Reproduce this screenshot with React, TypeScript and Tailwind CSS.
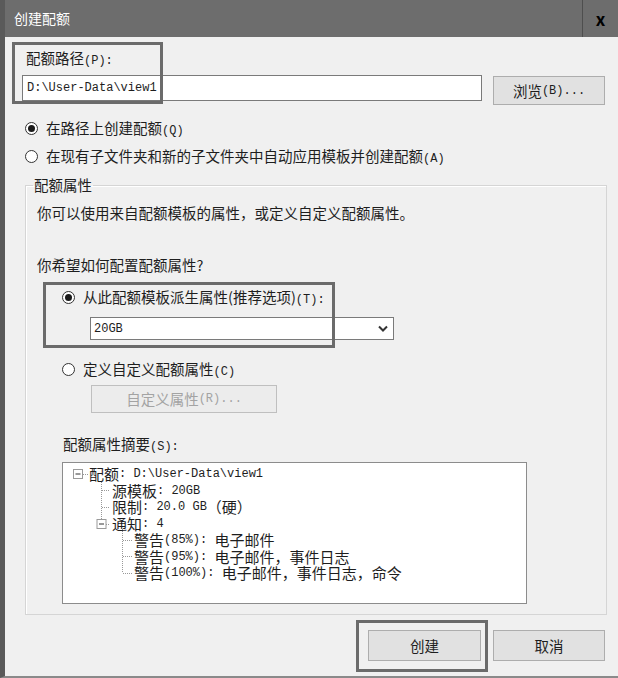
// create quota dialog (File Server Resource Manager style)

const L = ({ children }: { children: React.ReactNode }) => (
  <span className="font-['Liberation_Mono','Noto_Sans_CJK_SC',monospace] text-[12px]">
    {children}
  </span>
);

const Radio = ({ checked }: { checked?: boolean }) => (
  <span className="flex h-[13px] w-[13px] shrink-0 items-center justify-center rounded-full border border-[#333] bg-white">
    {checked && <span className="h-[7px] w-[7px] rounded-full bg-[#1a1a1a]" />}
  </span>
);

const Highlight = ({ className }: { className: string }) => (
  <div className={`pointer-events-none absolute border-[3px] border-[#6b6b6b] ${className}`} />
);

const TreeLines = () => (
  <svg className="absolute left-0 top-0" width="120" height="130" fill="none">
    {/* root expander */}
    <rect x="10.5" y="6.5" width="9" height="9" fill="#fff" stroke="#9a9a9a" />
    <line x1="12.5" y1="11" x2="17.5" y2="11" stroke="#333" />
    <line x1="20" y1="11.5" x2="25" y2="11.5" stroke="#999" strokeDasharray="1 1" />
    {/* child vertical */}
    <line x1="38.5" y1="19" x2="38.5" y2="56" stroke="#999" strokeDasharray="1 1" />
    <line x1="39" y1="27.5" x2="47" y2="27.5" stroke="#999" strokeDasharray="1 1" />
    <line x1="39" y1="44.5" x2="47" y2="44.5" stroke="#999" strokeDasharray="1 1" />
    {/* 通知 expander */}
    <rect x="34" y="56.5" width="9" height="9" fill="#fff" stroke="#9a9a9a" />
    <line x1="36" y1="61" x2="41" y2="61" stroke="#333" />
    <line x1="43" y1="61.5" x2="47" y2="61.5" stroke="#999" strokeDasharray="1 1" />
    {/* grandchildren */}
    <line x1="59.5" y1="66" x2="59.5" y2="110" stroke="#999" strokeDasharray="1 1" />
    <line x1="60" y1="77.5" x2="69" y2="77.5" stroke="#999" strokeDasharray="1 1" />
    <line x1="60" y1="93.5" x2="69" y2="93.5" stroke="#999" strokeDasharray="1 1" />
    <line x1="60" y1="110.5" x2="69" y2="110.5" stroke="#999" strokeDasharray="1 1" />
  </svg>
);

const treeRows: { pl: string; cjk: string; rest: string; tail?: string }[] = [
  { pl: "pl-[26px]", cjk: "配额", rest: ": D:\\User-Data\\view1" },
  { pl: "pl-[49px]", cjk: "源模板", rest: ": 20GB" },
  { pl: "pl-[49px]", cjk: "限制", rest: ": 20.0 GB", tail: "（硬）" },
  { pl: "pl-[49px]", cjk: "通知", rest: ": 4" },
  { pl: "pl-[71px]", cjk: "警告", rest: "(85%): ", tail: "电子邮件" },
  { pl: "pl-[71px]", cjk: "警告", rest: "(95%): ", tail: "电子邮件，事件日志" },
  { pl: "pl-[71px]", cjk: "警告", rest: "(100%): ", tail: "电子邮件，事件日志，命令" },
];

const App = () => {
  return (
    <div className="relative flex h-[678px] w-[618px] flex-col overflow-hidden border-b-2 border-l-[5px] border-b-[#8a8a8a] border-l-[#5a5a5a] bg-[#f0f0f0] font-['Noto_Sans_CJK_SC',sans-serif] text-[14.5px] text-[#1e1e1e]">
      {/* title bar */}
      <div className="flex h-[37px] shrink-0 items-center bg-[#6d6d6d]">
        <span className="flex-1 pl-[9px] text-[14px] text-white">创建配额</span>
        <span className="flex h-full w-[36px] items-center justify-center border-l border-[#4e4e4e] text-[17px] font-bold text-black">
          x
        </span>
      </div>

      <div className="flex flex-1 flex-col pl-[17px] pr-[13px] pt-[11px]">
        {/* quota path */}
        <div className="ml-[4px] leading-[20px]">
          配额路径<L>(P):</L>
        </div>
        <div className="mt-[4px] flex items-start gap-[11px]">
          <div className="flex h-[26px] w-[460px] items-center border border-[#7a7a7a] bg-white pl-[4px] font-['Liberation_Mono',monospace] text-[12px]">
            D:\User-Data\view1
          </div>
          <button className="mt-[1px] flex h-[29px] flex-1 items-center justify-center border border-[#adadad] bg-[#e1e1e1]">
            浏览<L>(B)...</L>
          </button>
        </div>

        <div className="mt-[13px] flex h-[20px] items-center gap-[8px] pl-[3px]">
          <Radio checked />
          <span>
            在路径上创建配额<L>(Q)</L>
          </span>
        </div>
        <div className="mt-[8px] flex h-[20px] items-center gap-[8px] pl-[3px]">
          <Radio />
          <span>
            在现有子文件夹和新的子文件夹中自动应用模板并创建配额<L>(A)</L>
          </span>
        </div>

        {/* quota properties group */}
        <fieldset className="ml-[3px] mr-[-2px] mt-[9px] border border-[#d5d5d5] pb-[10px] pl-[11px] shadow-[inset_1px_1px_0_#fff]">
          <legend className="-ml-[4px] px-[1px] leading-[20px]">配额属性</legend>
          <div className="mt-[8px] leading-[20px]">你可以使用来自配额模板的属性，或定义自定义配额属性。</div>
          <div className="mt-[32px] leading-[20px]">你希望如何配置配额属性?</div>

          <div className="mt-[12px] flex h-[20px] items-center gap-[8px] pl-[25px]">
            <Radio checked />
            <span>
              从此配额模板派生属性(推荐选项)<L>(T):</L>
            </span>
          </div>
          <div className="ml-[53px] mt-[10px] flex h-[23px] w-[304px] items-center justify-between border border-[#7a7a7a] bg-white pl-[3px] pr-[5px] font-['Liberation_Mono',monospace] text-[12px]">
            <span>20GB</span>
            <svg width="10" height="7" viewBox="0 0 10 7" fill="none">
              <path d="M1 1.5 L5 5.5 L9 1.5" stroke="#333" strokeWidth="2" />
            </svg>
          </div>

          <div className="mt-[19px] flex h-[20px] items-center gap-[8px] pl-[25px]">
            <Radio />
            <span>
              定义自定义配额属性<L>(C)</L>
            </span>
          </div>
          <button className="ml-[54px] mt-[6px] flex h-[28px] w-[186px] items-center justify-center border border-[#bfbfbf] bg-[#ececec] text-[#a3a3a3]">
            自定义属性<L>(R)...</L>
          </button>

          <div className="ml-[26px] mt-[21px] leading-[20px]">
            配额属性摘要<L>(S):</L>
          </div>
          <div className="relative ml-[25px] mt-[5px] h-[142px] w-[465px] border border-[#8c8c8c] bg-white pt-[3px] text-[15px] leading-[16.5px]">
            <TreeLines />
            {treeRows.map((row, i) => (
              <div key={i} className={`flex h-[16.5px] items-center whitespace-pre leading-[16.5px] ${row.pl}`}>
                <span>{row.cjk}</span>
                <L>{row.rest}</L>
                {row.tail && <span>{row.tail}</span>}
              </div>
            ))}
          </div>
        </fieldset>

        {/* footer buttons */}
        <div className="mt-[15px] flex justify-end gap-[12px]">
          <button className="flex h-[31px] w-[113px] items-center justify-center border border-[#adadad] bg-[#e1e1e1]">
            创建
          </button>
          <button className="flex h-[31px] w-[112px] items-center justify-center border border-[#adadad] bg-[#e1e1e1]">
            取消
          </button>
        </div>
      </div>

      {/* annotation boxes */}
      <Highlight className="left-[7px] top-[42px] h-[62px] w-[151px]" />
      <Highlight className="left-[38px] top-[282px] h-[66px] w-[292px]" />
      <Highlight className="left-[351px] top-[620px] h-[52px] w-[132px]" />
    </div>
  );
};

export default App;
